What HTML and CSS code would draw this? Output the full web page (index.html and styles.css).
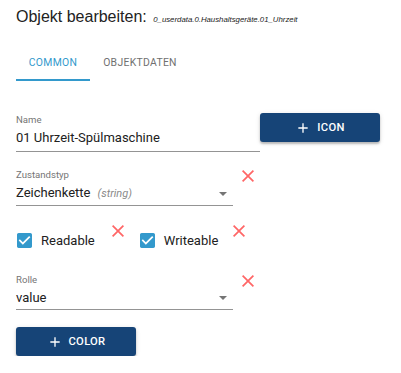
FILE: index.html
```html
<!DOCTYPE html>
<html lang="de">
<head>
<meta charset="utf-8">
<title>Objekt bearbeiten</title>
<link rel="stylesheet" href="styles.css">
</head>
<body>
<div class="dialog">
  <div class="title">Objekt bearbeiten: <span class="oid">0_userdata.0.Haushaltsgeräte.01_Uhrzeit</span></div>
  <div class="tabs">
    <div class="tab tab-common active">COMMON</div>
    <div class="tab tab-data">OBJEKTDATEN</div>
  </div>
  <div class="form">
    <div class="row row-name">
      <div class="field field-name">
        <div class="label">Name</div>
        <div class="value">01 Uhrzeit-Spülmaschine</div>
      </div>
      <button class="btn btn-icon"><svg class="plus" viewBox="0 0 24 24"><path d="M19 13h-6v6h-2v-6H5v-2h6V5h2v6h6v2z"/></svg>ICON</button>
    </div>
    <div class="row row-type">
      <div class="field select">
        <div class="label">Zustandstyp</div>
        <div class="value"><span class="text">Zeichenkette<span class="hint">(string)</span></span><svg class="arrow" viewBox="7 10 10 5"><path d="M7 10l5 5 5-5z"/></svg></div>
      </div>
      <svg class="del del-type" viewBox="5 5 14 14"><path d="M19 6.41L17.59 5 12 10.59 6.41 5 5 6.41 10.59 12 5 17.59 6.41 19 12 13.41 17.59 19 19 17.59 13.41 12z"/></svg>
    </div>
    <div class="row row-checks">
      <label class="check"><svg class="box" viewBox="3 3 18 18"><path d="M19 3H5c-1.11 0-2 .9-2 2v14c0 1.1.89 2 2 2h14c1.11 0 2-.9 2-2V5c0-1.1-.89-2-2-2zm-9 14l-5-5 1.41-1.41L10 14.17l7.590-7.59L19 8l-9 9z"/></svg><span>Readable</span></label>
      <svg class="del del-read" viewBox="5 5 14 14"><path d="M19 6.41L17.59 5 12 10.59 6.41 5 5 6.41 10.59 12 5 17.59 6.41 19 12 13.41 17.59 19 19 17.59 13.41 12z"/></svg>
      <label class="check check-write"><svg class="box" viewBox="3 3 18 18"><path d="M19 3H5c-1.11 0-2 .9-2 2v14c0 1.1.89 2 2 2h14c1.11 0 2-.9 2-2V5c0-1.1-.89-2-2-2zm-9 14l-5-5 1.41-1.41L10 14.17l7.59-7.59L19 8l-9 9z"/></svg><span>Writeable</span></label>
      <svg class="del del-write" viewBox="5 5 14 14"><path d="M19 6.41L17.59 5 12 10.59 6.41 5 5 6.41 10.59 12 5 17.59 6.41 19 12 13.41 17.59 19 19 17.59 13.41 12z"/></svg>
    </div>
    <div class="row row-role">
      <div class="field select">
        <div class="label">Rolle</div>
        <div class="value"><span class="text">value</span><svg class="arrow" viewBox="7 10 10 5"><path d="M7 10l5 5 5-5z"/></svg></div>
      </div>
      <svg class="del del-type" viewBox="5 5 14 14"><path d="M19 6.41L17.59 5 12 10.59 6.41 5 5 6.41 10.59 12 5 17.59 6.41 19 12 13.41 17.59 19 19 17.59 13.41 12z"/></svg>
    </div>
    <button class="btn btn-color"><svg class="plus" viewBox="0 0 24 24"><path d="M19 13h-6v6h-2v-6H5v-2h6V5h2v6h6v2z"/></svg>COLOR</button>
  </div>
</div>
</body>
</html>
```

FILE: styles.css
```css
* { box-sizing: border-box; }

body {
  margin: 0;
  background: #ffffff;
  font-family: Roboto, "Liberation Sans", Arial, sans-serif;
  color: #212121;
}

.dialog {
  padding: 0 16px;
}

.title {
  height: 43px;
  padding-top: 7px;
  font-family: "Liberation Sans", Arial, sans-serif;
  font-size: 16px;
  line-height: 20px;
  color: #222222;
  white-space: nowrap;
}

.oid {
  margin-left: 2px;
  font-size: 7.8px;
  font-style: italic;
}

.tabs {
  display: flex;
  height: 38px;
}

.tab {
  height: 38px;
  display: flex;
  align-items: center;
  justify-content: center;
  font-size: 10.4px;
  letter-spacing: 0.3px;
  color: #707070;
}

.tab-common { width: 74px; }
.tab-data { width: 100px; }

.tab.active {
  color: #3399cc;
  box-shadow: inset 0 -2px 0 #3399cc;
}

.form {
  padding-top: 32px;
}

.row {
  display: flex;
  align-items: flex-start;
}

.field {
  border-bottom: 1px solid #949494;
}

.label {
  font-size: 9.6px;
  line-height: 12px;
  color: #757575;
}

.value {
  margin-top: 4px;
  font-size: 13px;
  line-height: 16px;
  color: #212121;
  display: flex;
  align-items: center;
}

.field-name {
  width: 244px;
  margin-top: 1px;
  padding-bottom: 5px;
}

.btn {
  width: 120px;
  height: 29px;
  border: none;
  border-radius: 3px;
  background: #164477;
  color: #ffffff;
  display: flex;
  align-items: center;
  justify-content: center;
  font-family: Roboto, sans-serif;
  font-weight: 500;
  font-size: 11.2px;
  letter-spacing: 0.3px;
  padding: 0;
  box-shadow: 0 2px 2px rgba(0, 0, 0, 0.22), 0 1px 5px rgba(0, 0, 0, 0.12);
}

.plus {
  width: 16px;
  height: 16px;
  margin-right: 6px;
  fill: #ffffff;
}

.row-type {
  margin-top: 17px;
}

.select {
  width: 217px;
  padding-bottom: 3px;
}

.select .text {
  flex: 1;
  white-space: nowrap;
}

.hint {
  margin-left: 7px;
  font-size: 11px;
  font-style: italic;
  color: #8a8a8a;
}

.arrow {
  width: 8px;
  height: 4px;
  margin-right: 6px;
  fill: #757575;
}

.del {
  width: 12px;
  height: 12px;
  fill: #ff6666;
  flex: none;
}

.del-type {
  margin-top: 1px;
  margin-left: 9px;
}

.row-checks {
  margin-top: 19px;
}

.check {
  display: flex;
  align-items: center;
  height: 15px;
  margin-top: 8px;
  font-size: 13px;
  line-height: 16px;
  color: #212121;
}

.box {
  width: 15px;
  height: 15px;
  margin-left: 1px;
  margin-right: 9px;
  fill: #3399cc;
}

.del-read {
  margin-left: 17px;
}

.check-write {
  margin-left: 15px;
}

.del-write {
  margin-left: 15px;
}

.row-role {
  margin-top: 26px;
}

.btn-color {
  margin-top: 17px;
}
```
